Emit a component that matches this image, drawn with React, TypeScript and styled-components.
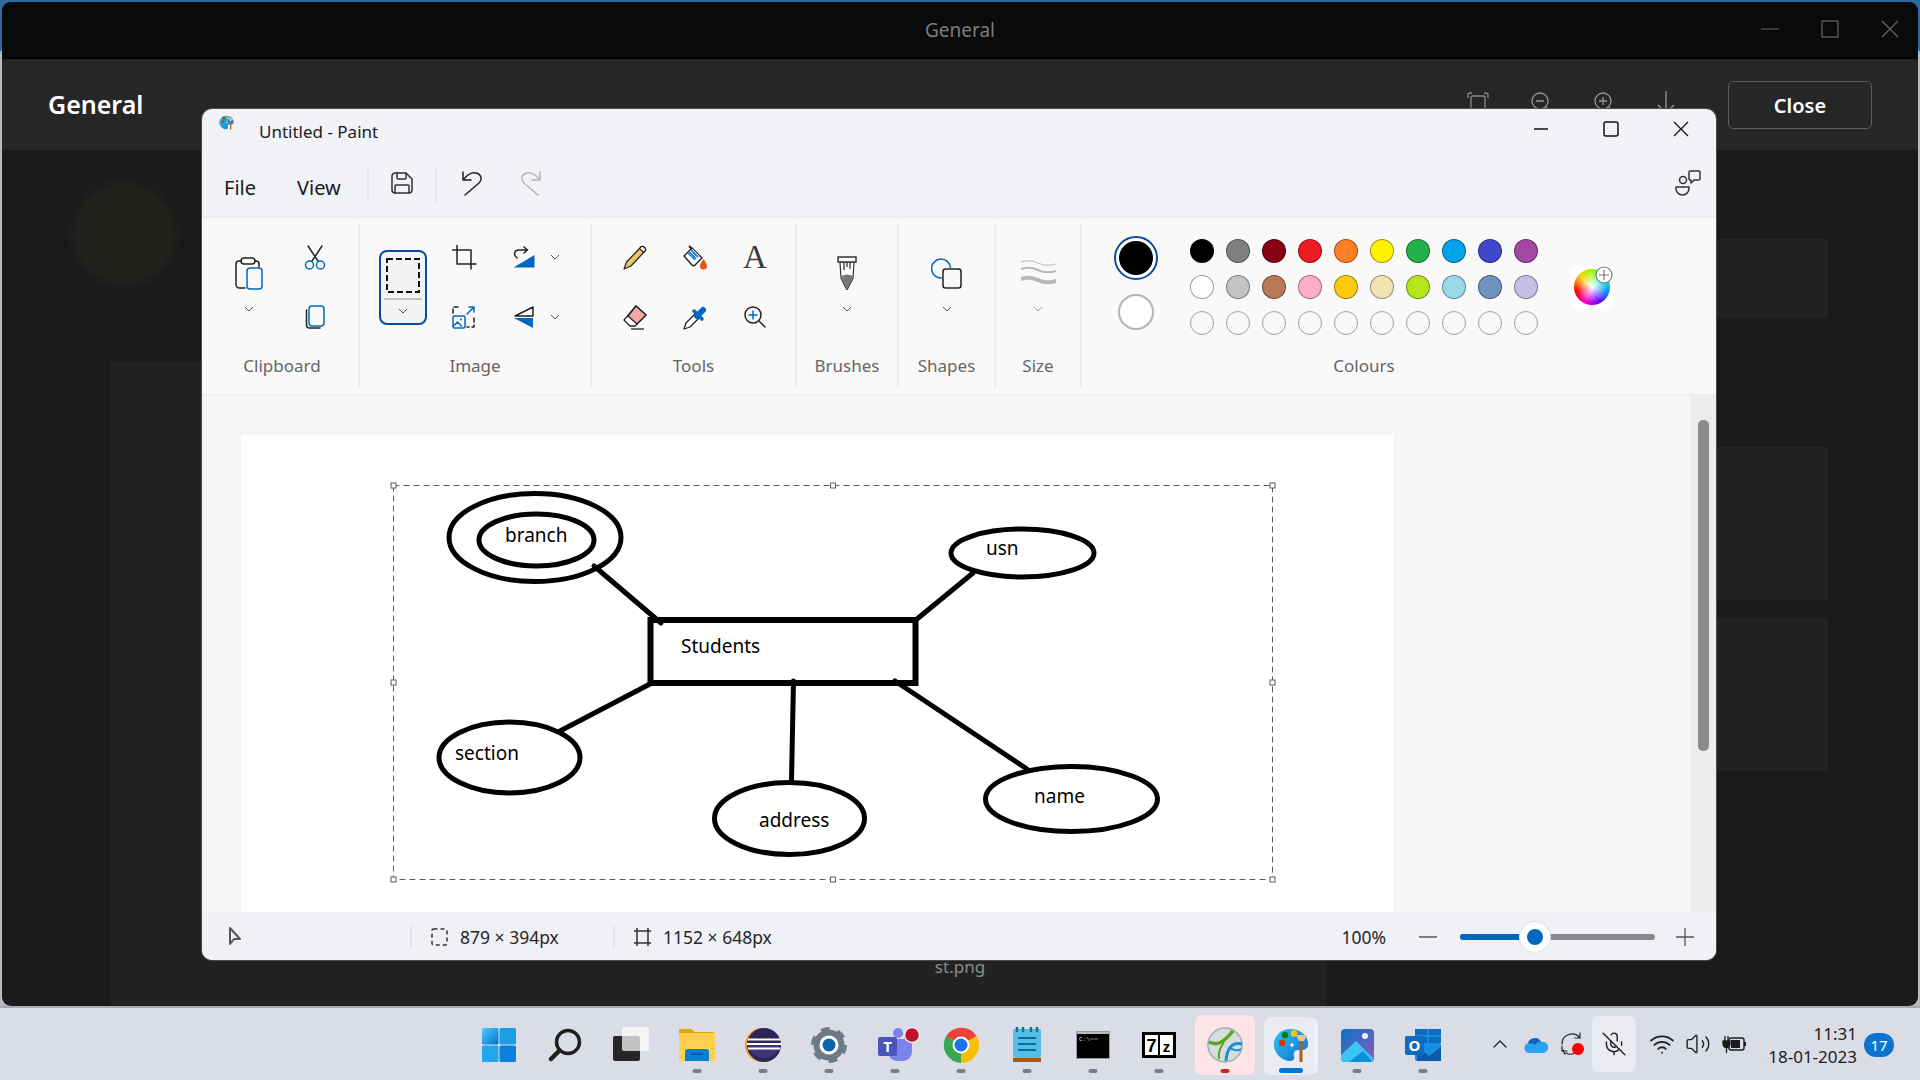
import { ReactNode } from 'react';
import styled, { createGlobalStyle } from 'styled-components';
import { ChevronUp, MicOff, Volume2, Wifi } from 'lucide-react';

const font = '"Noto Sans", "Open Sans", Arial, sans-serif';

const GlobalStyle = createGlobalStyle`
    html, body {
        margin: 0;
        padding: 0;
        width: 1920px;
        height: 1080px;
        overflow: hidden;
    }
    body {
        font-family: ${font};
        background: #dadce6;
    }
    svg {
        display: block;
        flex-shrink: 0;
    }
`;

const Screen = styled.div`
    position: relative;
    width: 1920px;
    height: 1080px;
    display: flex;
    flex-direction: column;
    background: linear-gradient(#2f6a9e 0, #2f6a9e 50px, #b9bac0 52px);
`;

/* viewer window behind paint */
const Viewer = styled.div`
    height: 1004px;
    margin: 2px 2px 0;
    border-radius: 9px;
    overflow: hidden;
    display: flex;
    flex-direction: column;
    background: #1a1a1a;
`;

const ViewerTitle = styled.div`
    position: relative;
    flex: 0 0 56px;
    display: flex;
    align-items: center;
    justify-content: center;
    background: #0a0a0a;
    border-bottom: 1px solid #000;
    color: #7d7d7d;
    font-size: 19px;
`;

const ViewerControls = styled.div`
    position: absolute;
    right: -2px;
    top: 0;
    height: 54px;
    display: flex;
    align-items: center;
`;

const ViewerControl = styled.div`
    width: 60px;
    display: flex;
    justify-content: center;
`;

const ViewerHeader = styled.div`
    flex: 0 0 91px;
    display: flex;
    align-items: center;
    padding: 0 46px;
    background: #262626;
`;

const HeaderTitle = styled.div`
    color: #fff;
    font-size: 25px;
    font-weight: 600;
    margin-top: -1px;
`;

const HeaderIcons = styled.div`
    display: flex;
    align-items: center;
    margin-left: auto;
    margin-right: 52px;
    margin-top: -4px;
    gap: 41px;
`;

const CloseButton = styled.button`
    width: 144px;
    height: 48px;
    margin-top: 1px;
    border: 1px solid #5c5c5c;
    border-radius: 5px;
    background: #262626;
    color: #fff;
    font-family: ${font};
    font-size: 20px;
    font-weight: 600;
`;

const ViewerBody = styled.div`
    position: relative;
    flex: 1;
    display: flex;
    padding-left: 108px;
`;

const DocColumn = styled.div`
    width: 1216px;
    display: flex;
    flex-direction: column;
`;

const Avatar = styled.div`
    width: 104px;
    height: 104px;
    margin: 32px 0 76px -38px;
    border-radius: 50%;
    background: #24221f;
    filter: blur(4px);
`;

const DocPanel = styled.div`
    flex: 1;
    background: #222;
`;

const SideColumn = styled.div`
    width: 428px;
    margin-left: auto;
    margin-right: 90px;
    padding-top: 89px;
`;

const SideCard = styled.div<{ $height: number; $gap: number }>`
    height: ${p => p.$height}px;
    margin-bottom: ${p => p.$gap}px;
    background: #222;
`;

const Caption = styled.div`
    position: absolute;
    left: 0;
    right: 0;
    bottom: 28px;
    text-align: center;
    color: #8c8c8c;
    font-size: 17px;
`;

/* paint window */
const PaintWindow = styled.div`
    position: absolute;
    left: 202px;
    top: 109px;
    width: 1514px;
    height: 851px;
    display: flex;
    flex-direction: column;
    overflow: hidden;
    border-radius: 10px;
    background: #f1f3f8;
    box-shadow: 0 0 0 1px #4a4a4a;
`;

const TitleBar = styled.div`
    flex: 0 0 51px;
    display: flex;
    align-items: flex-start;
    padding-left: 17px;
`;

const TitleLogo = styled.div`
    margin: 6px 25px 0 0;
`;

const WindowTitle = styled.div`
    margin-top: 11px;
    color: #1b1b1b;
    font-size: 17px;
    line-height: 24px;
`;

const WindowControls = styled.div`
    display: flex;
    margin-left: auto;
`;

const WindowControl = styled.div<{ $width: number }>`
    width: ${p => p.$width}px;
    height: 40px;
    display: flex;
    align-items: center;
    justify-content: center;
`;

const MenuBar = styled.div`
    flex: 0 0 56px;
    box-sizing: border-box;
    display: flex;
    align-items: center;
    padding: 0 0 6px 22px;
`;

const MenuItem = styled.div<{ $width: number }>`
    width: ${p => p.$width}px;
    margin-top: 4px;
    color: #1b1b1b;
    font-size: 20px;
`;

const MenuDivider = styled.div`
    width: 2px;
    height: 36px;
    background: #e6e7eb;
`;

const MenuIcon = styled.div<{ $width: number }>`
    width: ${p => p.$width}px;
    margin-bottom: 4px;
    display: flex;
    justify-content: center;
`;

const FeedbackIcon = styled.div`
    margin: 0 15px 4px auto;
`;

const Ribbon = styled.div`
    flex: 0 0 180px;
    display: flex;
    background: #f9f9f9;
    border-top: 2px solid #ededed;
    border-bottom: 2px solid #ededed;
    box-sizing: border-box;
`;

const Group = styled.section<{ $width: number; $last?: boolean }>`
    flex: 0 0 ${p => p.$width}px;
    box-sizing: border-box;
    height: 164px;
    margin: 5px 0;
    padding-top: 4px;
    display: flex;
    flex-direction: column;
    border-right: ${p => (p.$last ? 'none' : '2px solid #ececec')};
`;

const ToolGrid = styled.div<{ $columns: string; $inset: number }>`
    height: 120px;
    display: grid;
    grid-template-columns: ${p => p.$columns};
    grid-template-rows: 60px 60px;
    padding-left: ${p => p.$inset}px;
`;

const ToolCell = styled.div`
    display: flex;
    align-items: center;
    justify-content: center;
`;

const LargeTool = styled.div`
    grid-row: span 2;
    display: flex;
    flex-direction: column;
    align-items: center;
    padding-top: 28px;
`;

const LargeToolIcon = styled.div`
    height: 36px;
    display: flex;
    align-items: center;
`;

const LargeToolChevron = styled.div`
    margin-top: 15px;
`;

const SelectButton = styled.div`
    grid-row: span 2;
    align-self: center;
    box-sizing: border-box;
    height: 75px;
    display: flex;
    flex-direction: column;
    align-items: center;
    padding-top: 6px;
    border: 2px solid #0a4c9c;
    border-radius: 8px;
    background: #f4f4f4;
`;

const SelectRule = styled.div`
    align-self: stretch;
    height: 2px;
    margin: 5px 3px 8px;
    background: #c4c4c4;
`;

const SplitTool = styled.div`
    display: flex;
    align-items: center;
    gap: 15px;
    padding-left: 12px;
`;

const GroupLabel = styled.div<{ $shift?: number }>`
    height: 20px;
    margin-top: 9px;
    padding-left: ${p => p.$shift || 0}px;
    line-height: 20px;
    text-align: center;
    color: #666;
    font-size: 17px;
`;

const ColoursRow = styled.div`
    height: 120px;
    display: flex;
    align-items: flex-start;
    padding-left: 32px;
`;

const ActiveColours = styled.div`
    width: 44px;
    margin-top: 9px;
    display: flex;
    flex-direction: column;
    align-items: center;
    gap: 14px;
`;

const PrimaryColour = styled.div`
    box-sizing: border-box;
    width: 44px;
    height: 44px;
    border: 2px solid #0a4c9c;
    border-radius: 50%;
    padding: 3px;
    background: #fff;
    background-clip: padding-box;
`;

const PrimaryFill = styled.div`
    width: 100%;
    height: 100%;
    border-radius: 50%;
    background: #000;
`;

const SecondaryColour = styled.div`
    box-sizing: border-box;
    width: 36px;
    height: 36px;
    border: 2px solid #b4b4b4;
    border-radius: 50%;
    background: #fff;
`;

const SwatchGrid = styled.div`
    margin: 6px 0 0 26px;
    display: grid;
    grid-template-columns: repeat(10, 36px);
    grid-auto-rows: 36px;
`;

const SwatchCell = styled.div`
    display: flex;
    align-items: center;
    justify-content: center;
`;

const Swatch = styled.div<{ $colour?: string }>`
    box-sizing: border-box;
    width: 24px;
    height: 24px;
    border-radius: 50%;
    background: ${p => p.$colour || 'transparent'};
    border: ${p => (p.$colour ? '1.5px solid rgba(0, 0, 0, 0.38)' : '1.5px solid #a0a0a0')};
`;

const WheelBox = styled.div`
    position: relative;
    width: 43px;
    height: 42px;
    margin: 39px 0 0 27px;
    background: #fff;
`;

const Wheel = styled.div`
    width: 36px;
    height: 36px;
    margin: 3px;
    border-radius: 50%;
    background:
        radial-gradient(circle, #fff 0, rgba(255, 255, 255, 0) 62%),
        conic-gradient(#9f0, #0fc, #09f, #60f, #f0c, #f00, #fc0, #9f0);
`;

const WheelPlus = styled.div`
    position: absolute;
    right: 1px;
    top: 0;
`;

const Workspace = styled.div`
    flex: 1;
    min-height: 0;
    display: flex;
    background: #f6f6f6;
`;

const CanvasArea = styled.div`
    flex: 1;
    padding: 39px 0 0 39px;
    overflow: hidden;
`;

const Canvas = styled.div`
    width: 1152px;
    height: 477px;
    background: #fff;
`;

const ScrollTrack = styled.div`
    flex: 0 0 25px;
    box-sizing: border-box;
    padding: 24px 7px 0;
    background: #ececec;
`;

const ScrollThumb = styled.div`
    height: 331px;
    border-radius: 5px;
    background: #8b8b8b;
`;

const StatusBar = styled.div`
    flex: 0 0 48px;
    display: flex;
    align-items: center;
    padding-top: 1px;
    box-sizing: border-box;
    color: #262626;
    font-size: 17.5px;
    background: #eff1f7;
`;

const StatusCell = styled.div<{ $width: number; $divider?: boolean }>`
    position: relative;
    box-sizing: border-box;
    width: ${p => p.$width}px;
    display: flex;
    align-items: center;
    gap: 12px;
    padding-left: ${p => (p.$divider ? 19 : 25)}px;
    border-left: ${p => (p.$divider ? '2px solid #e2e3e8' : 'none')};
    height: 22px;
`;

const ZoomControls = styled.div`
    margin-left: auto;
    display: flex;
    align-items: center;
    padding-right: 22px;
`;

const ZoomValue = styled.div`
    margin-right: 33px;
`;

const ZoomSlider = styled.div`
    position: relative;
    width: 195px;
    height: 6px;
    margin: 0 21px 0 23px;
    border-radius: 3px;
    background: #8a8a8a;
`;

const ZoomFill = styled.div`
    height: 100%;
    border-radius: 3px;
    background: #0067c0;
`;

const ZoomThumb = styled.div`
    position: absolute;
    left: 60px;
    top: -12px;
    width: 30px;
    height: 30px;
    box-sizing: border-box;
    border: 7px solid #fff;
    border-radius: 50%;
    background: #0067c0;
    box-shadow: 0 0 0 1px #e2e3e8;
`;

/* taskbar */
const TaskBar = styled.div`
    flex: 1;
    display: flex;
    box-sizing: border-box;
    padding: 7px 26px 0 466px;
    border-top: 2px solid #a9aaae;
    background: #dadce6;
`;

const TaskButton = styled.div`
    position: relative;
    width: 66px;
    height: 60px;
    display: flex;
    align-items: center;
    justify-content: center;
`;

const TaskHighlight = styled.div<{ $variant: 'alert' | 'active' }>`
    position: absolute;
    top: ${p => (p.$variant === 'active' ? 2 : 0)}px;
    bottom: 0;
    left: ${p => (p.$variant === 'active' ? 6 : 3)}px;
    right: ${p => (p.$variant === 'active' ? 10 : 3)}px;
    border-radius: 7px;
    background: ${p => (p.$variant === 'active' ? '#ebecf1' : '#fde4e6')};
    box-shadow: ${p => (p.$variant === 'active' ? '5px 0 0 -1px #f0f1f4' : 'none')};
`;

const TaskIconSlot = styled.div<{ $nudge?: number }>`
    position: relative;
    left: ${p => p.$nudge || 0}px;
`;

const TaskDot = styled.div<{ $variant?: 'alert' | 'active' }>`
    position: absolute;
    bottom: 2px;
    left: 50%;
    transform: translateX(-50%);
    width: ${p => (p.$variant === 'active' ? 24 : 9)}px;
    height: ${p => (p.$variant === 'active' ? 5 : 4)}px;
    border-radius: 3px;
    background: ${p => (p.$variant === 'active' ? '#0078d4' : p.$variant === 'alert' ? '#c42b1c' : '#7b7d84')};
`;

const Tray = styled.div`
    margin-left: auto;
    display: flex;
    align-items: center;
    height: 60px;
    margin-top: -1px;
`;

const TraySlot = styled.div`
    width: 36px;
    display: flex;
    justify-content: center;
`;

const MicSlot = styled.div`
    width: 44px;
    height: 56px;
    margin: 0 8px 0 2px;
    display: flex;
    align-items: center;
    justify-content: center;
    border-radius: 6px;
    background: #ebecf1;
`;

const Clock = styled.div`
    width: 105px;
    margin-top: 1px;
    text-align: right;
    color: #1b1b1b;
    font-size: 17px;
    line-height: 23px;
`;

const Badge = styled.div`
    width: 30px;
    height: 24px;
    margin: 2px 0 0 7px;
    border-radius: 12px;
    text-align: center;
    color: #fff;
    font-size: 15px;
    line-height: 24px;
    background: #0a74cf;
`;

const SerifGlyph = styled.div`
    color: #3a3a3a;
    font-family: "Liberation Serif", serif;
    font-size: 33px;
    line-height: 34px;
`;

const blue = '#0067c0';
const ink = '#222';

const Line = {
    fill: 'none',
    stroke: ink,
    strokeWidth: 1.5,
    strokeLinecap: 'round',
    strokeLinejoin: 'round',
} as const;

const Chevron = ({ colour = '#555' }: { colour?: string }) => (
    <svg width="10" height="6" viewBox="0 0 10 6">
        <path d="M1 1l4 4 4-4" fill="none" stroke={colour} strokeWidth="1" />
    </svg>
);

const PasteIcon = () => (
    <svg width="28" height="34" viewBox="0 0 28 34">
        <path {...Line} d="M10 32H4.500A3.500 3.500 0 0 1 1 28.500V8A3 3 0 0 1 4 5h2M20 5h1a3 3 0 0 1 3 3v3" />
        <rect {...Line} x="6" y="2" width="14" height="6" rx="3" />
        <rect {...Line} stroke={blue} x="12" y="12" width="15" height="21" rx="3" />
    </svg>
);

const CutIcon = () => (
    <svg width="22" height="25" viewBox="0 0 22 25">
        <path {...Line} d="M4 1l10 15M18 1L8 16" />
        <circle {...Line} stroke={blue} cx="5.500" cy="20" r="4" />
        <circle {...Line} stroke={blue} cx="16.500" cy="20" r="4" />
    </svg>
);

const CopyIcon = () => (
    <svg width="20" height="24" viewBox="0 0 20 24">
        <path {...Line} d="M1.500 5v15a3 3 0 0 0 3 3H15" />
        <rect {...Line} stroke={blue} x="4" y="1" width="15" height="20" rx="3" />
    </svg>
);

const SelectIcon = () => (
    <svg width="34" height="35" viewBox="0 0 34 35">
        <rect x="1" y="1" width="32" height="33" fill="#f4f4f4" stroke="#111" strokeWidth="2" strokeDasharray="6 3" />
    </svg>
);

const CropIcon = () => (
    <svg width="25" height="25" viewBox="0 0 25 25">
        <path {...Line} d="M5 .5V19h19M.5 5H19v19" />
    </svg>
);

const RotateIcon = () => (
    <svg width="22" height="22" viewBox="0 0 22 22">
        <path d="M21.500 9v12.500H.5z" fill={blue} />
        <path {...Line} d="M4 12C0 9 1 4 6 4h8M11 1l3.500 3L11 7" />
    </svg>
);

const FlipIcon = () => (
    <svg width="22" height="22" viewBox="0 0 22 22">
        <path {...Line} d="M20 1L2 10h18z" />
        <path d="M1 12h19v10z" fill={blue} />
    </svg>
);

const ResizeIcon = () => (
    <svg width="24" height="24" viewBox="0 0 24 24">
        <path {...Line} strokeDasharray="4 3" d="M1 8V2h8M22 13v9h-7" />
        <path {...Line} stroke={blue} d="M15 9l7-7M17 2h5v5" />
        <rect {...Line} stroke={blue} x="1" y="11" width="12" height="12" rx="1.500" />
        <path {...Line} stroke={blue} d="M1.500 21l4-4 4 4" />
        <circle cx="9" cy="14.500" r="1" fill={blue} />
    </svg>
);

const PencilIcon = () => (
    <svg width="24" height="25" viewBox="0 0 24 25">
        <path d="M1 24l2.500-7L18 2c2-2 6 2 4 4L8 21z" fill="#ecc46c" stroke={ink} strokeWidth="1.200" strokeLinejoin="round" />
        <path d="M18 2c2-2 6 2 4 4l-1.500 1.500-4-4z" fill="#fff" stroke={ink} strokeWidth="1.200" />
    </svg>
);

const FillIcon = () => (
    <svg width="25" height="25" viewBox="0 0 25 25">
        <path d="M1 11l8-8 10 10-7 7a2 2 0 0 1-3 0z" fill="#fff" stroke={ink} strokeWidth="1.400" strokeLinejoin="round" />
        <path d="M4.500 8.500L9 4l7 7-4.500 4.500z" fill="#2d88d8" />
        <path d="M7 6l7 7M9 4l7 7" stroke="#fff" strokeWidth="1" />
        <path d="M6 1l3 3" stroke={ink} strokeWidth="2" />
        <path d="M20.500 14c1.500 2.500 3.500 4.500 3.500 7a3.500 3.500 0 0 1-7 0c0-2.500 2-4.500 3.500-7z" fill="#e4561a" />
    </svg>
);

const EraserIcon = () => (
    <svg width="24" height="25" viewBox="0 0 24 25">
        <path d="M13 1l10 9-11 11H7l-6-6z" fill="#fff" stroke={ink} strokeWidth="1.300" strokeLinejoin="round" />
        <path d="M13 1l10 9-9 9-9-8z" fill="#f3a8a6" stroke={ink} strokeWidth="1.300" strokeLinejoin="round" />
        <path d="M8 24h13" stroke={ink} strokeWidth="1.300" />
    </svg>
);

const PickerIcon = () => (
    <svg width="25" height="25" viewBox="0 0 25 25">
        <path d="M1 24l2-6L13 8l4 4L7 22z" fill="#fff" stroke={ink} strokeWidth="1.300" strokeLinejoin="round" />
        <path d="M11 6l8 8" stroke={blue} strokeWidth="3.500" strokeLinecap="round" />
        <path d="M14 11l6-6" stroke={blue} strokeWidth="6" strokeLinecap="round" />
    </svg>
);

const MagnifierIcon = () => (
    <svg width="22" height="22" viewBox="0 0 22 22">
        <circle {...Line} cx="9" cy="9" r="8" />
        <path {...Line} d="M15 15l6 6" />
        <path {...Line} stroke={blue} d="M9 5v8M5 9h8" />
    </svg>
);

const BrushIcon = () => (
    <svg width="20" height="34" viewBox="0 0 20 34">
        <path d="M3 6l1 16 6 12 6-12 1-16z" fill="#fff" stroke="#333" strokeWidth="1.200" />
        <path d="M4 20q6-3 12 0l-6 14z" fill="#777" />
        <path d="M1 1h18v5H1z" fill="#fff" stroke="#333" strokeWidth="1.500" />
        <path d="M7 6v8M10 6v5M13 6v7" stroke="#333" strokeWidth="1.300" />
    </svg>
);

const ShapesIcon = () => (
    <svg width="31" height="31" viewBox="0 0 31 31">
        <path d="M11 20A9.500 9.500 0 1 1 19.500 10" fill="none" stroke={blue} strokeWidth="1.500" />
        <rect {...Line} x="12" y="11" width="18" height="19" rx="2.500" />
    </svg>
);

const SizeIcon = () => (
    <svg width="35" height="27" viewBox="0 0 35 27" fill="none" stroke="#b8b8b8">
        <path strokeWidth="1" d="M0 2q9-3 17 1t18 1" />
        <path strokeWidth="2" d="M0 9q9-3 17 1t18 1" />
        <path strokeWidth="4" d="M0 19q9-3 17 1t18 1" />
    </svg>
);

const SaveIcon = () => (
    <svg width="22" height="22" viewBox="0 0 22 22">
        <path {...Line} stroke="#333" d="M1 4a3 3 0 0 1 3-3h11l6 6v11a3 3 0 0 1-3 3H4a3 3 0 0 1-3-3z" />
        <path {...Line} stroke="#333" d="M6 1v5a1 1 0 0 0 1 1h7a1 1 0 0 0 1-1V1M4 21v-7a1 1 0 0 1 1-1h12a1 1 0 0 1 1 1v7" />
    </svg>
);

const UndoIcon = ({ colour, flip }: { colour: string; flip?: boolean }) => (
    <svg width="22" height="25" viewBox="0 0 22 25" style={flip ? { transform: 'scaleX(-1)' } : undefined}>
        <path {...Line} stroke={colour} d="M4 24l14-12c4-4 2-9-3-10-4-1-8 1-12 6M2 1v8h8" />
    </svg>
);

const FeedbackGlyph = () => (
    <svg width="26" height="26" viewBox="0 0 26 26">
        <circle {...Line} stroke="#333" cx="8" cy="10" r="3.500" />
        <path {...Line} stroke="#333" d="M1 17h13v1.500a6.500 6.500 0 0 1-13 0z" />
        <path {...Line} stroke="#333" d="M14 2a1 1 0 0 1 1-1h9a1 1 0 0 1 1 1v7a1 1 0 0 1-1 1h-5l-3 3v-3h-1a1 1 0 0 1-1-1z" />
    </svg>
);

const PaintLogo = ({ size }: { size: number }) => (
    <svg width={size} height={size} viewBox="0 0 36 36">
        <defs>
            <linearGradient id="palette" x1="0" y1="0" x2="1" y2="1">
                <stop offset="0" stopColor="#35c4f5" />
                <stop offset="1" stopColor="#0a6fd0" />
            </linearGradient>
        </defs>
        <path d="M17 2C7 2 0 10 1 19c1 8 8 15 16 15 3 0 5-2 4-5-1-3 1-6 4-6h4c4 0 7-3 6-8C34 8 27 2 17 2z" fill="url(#palette)" />
        <circle cx="9" cy="16" r="3.200" fill="#d83b01" />
        <circle cx="12" cy="8" r="3.200" fill="#107c10" />
        <circle cx="21" cy="6.500" r="3.200" fill="#ffc500" />
        <circle cx="19" cy="18" r="1.800" fill="#e8f6fe" />
        <rect x="26.500" y="13" width="3" height="22" fill="#a5651d" />
        <path d="M23 8h11l-3 6h-5z" fill="#e8c28d" />
    </svg>
);

const WindowsLogo = () => (
    <svg width="36" height="36" viewBox="0 0 36 36">
        <defs>
            <linearGradient id="winPane" x1="0" y1="0" x2="1" y2="1">
                <stop offset="0" stopColor="#4fcbfb" />
                <stop offset="1" stopColor="#0072cf" />
            </linearGradient>
        </defs>
        <rect x="1" y="1" width="16.500" height="16.500" rx="1.500" fill="url(#winPane)" />
        <rect x="18.500" y="1" width="16.500" height="16.500" rx="1.500" fill="#1c9de8" />
        <rect x="1" y="18.500" width="16.500" height="16.500" rx="1.500" fill="#24a6ec" />
        <rect x="18.500" y="18.500" width="16.500" height="16.500" rx="1.500" fill="#0b7fdb" />
    </svg>
);

const SearchLogo = () => (
    <svg width="34" height="34" viewBox="0 0 34 34" fill="none" stroke="#1f1f1f">
        <circle cx="20" cy="14" r="11.500" strokeWidth="3.500" />
        <path d="M11.500 22.500L3 31" strokeWidth="4.500" strokeLinecap="round" />
    </svg>
);

const TaskViewLogo = () => (
    <svg width="36" height="36" viewBox="0 0 36 36">
        <rect x="0" y="9" width="27" height="25" rx="2" fill="#262626" />
        <rect x="9" y="0" width="27" height="24" rx="2" fill="#fff" fillOpacity="0.72" />
    </svg>
);

const ExplorerLogo = () => (
    <svg width="36" height="36" viewBox="0 0 36 36">
        <path d="M0 4a2 2 0 0 1 2-2h10l4 3h18a2 2 0 0 1 2 2v5H0z" fill="#e2a300" />
        <path d="M0 6h36v28H0z" fill="#ffd04f" />
        <path d="M6 34v-9a3 3 0 0 1 3-3h18a3 3 0 0 1 3 3v9z" fill="#0a7fd0" />
        <path d="M12 27h12" stroke="#06508a" strokeWidth="1.500" />
    </svg>
);

const EclipseLogo = () => (
    <svg width="36" height="36" viewBox="0 0 36 36">
        <circle cx="17" cy="18" r="17" fill="#f39c25" />
        <circle cx="19" cy="18" r="17" fill="#2b2458" />
        <path d="M2.500 18a17 17 0 0 0 33 0z" fill="#3f3478" />
        <path d="M3 12.500h32M2 17h34M3 21.500h32" stroke="#fff" strokeWidth="2" />
    </svg>
);

const SettingsLogo = () => (
    <svg width="36" height="36" viewBox="0 0 36 36">
        <circle cx="18" cy="18" r="12" fill="none" stroke="#6c7a88" strokeWidth="7" />
        <circle cx="18" cy="18" r="15" fill="none" stroke="#6c7a88" strokeWidth="6" strokeDasharray="8 7.700" />
        <circle cx="18" cy="18" r="9.500" fill="#fff" />
        <circle cx="18" cy="18" r="6.500" fill="#0a63ad" />
    </svg>
);

const TeamsLogo = () => (
    <svg width="44" height="36" viewBox="0 0 44 36">
        <circle cx="20" cy="6" r="5" fill="#7b83eb" />
        <circle cx="30" cy="9" r="4" fill="#5059c9" />
        <path d="M10 12h24v13a9 9 0 0 1-9 9h-6a9 9 0 0 1-9-9z" fill="#7b83eb" />
        <rect x="0" y="10" width="19" height="19" rx="2" fill="#4b53bc" />
        <text x="9.500" y="25" textAnchor="middle" fontSize="15" fontWeight="700" fill="#fff" fontFamily={font}>T</text>
        <circle cx="34" cy="8" r="7.500" fill="#c50f2f" stroke="#eee" strokeWidth="1.500" />
    </svg>
);

const ChromeLogo = () => (
    <svg width="36" height="36" viewBox="0 0 36 36">
        <path d="M18 18L3 9.300A18 18 0 0 1 33.600 9z" fill="#ea4335" />
        <path d="M18 18L33.600 9A18 18 0 0 1 18 36z" fill="#fbbc04" />
        <path d="M18 18V36A18 18 0 0 1 3 9.300z" fill="#34a853" />
        <circle cx="18" cy="18" r="8.500" fill="#fff" />
        <circle cx="18" cy="18" r="6.500" fill="#1a73e8" />
    </svg>
);

const NotepadLogo = () => (
    <svg width="30" height="36" viewBox="0 0 30 36">
        <rect x="1" y="2" width="28" height="29" rx="2" fill="#57bfe6" />
        <rect x="1" y="31" width="28" height="4" fill="#b5540f" />
        <path d="M5 4V1M11 4V1M19 4V1M25 4V1" stroke="#0d6d96" strokeWidth="2.500" strokeLinecap="round" />
        <path d="M6 11h18M6 17h18M6 23h18" stroke="#0d6d96" strokeWidth="2" />
    </svg>
);

const ConsoleLogo = () => (
    <svg width="34" height="28" viewBox="0 0 34 28">
        <rect x="0.500" y="0.500" width="33" height="27" fill="#000" stroke="#9a9ca3" />
        <rect x="1" y="1" width="32" height="2" fill="#b9bac0" />
        <text x="3" y="10" fontSize="6" fill="#ddd" fontFamily="Liberation Mono, monospace">C:\</text>
        <path d="M14 8h8" stroke="#777" strokeWidth="1" />
    </svg>
);

const SevenZipLogo = () => (
    <svg width="34" height="26" viewBox="0 0 34 26">
        <rect width="34" height="26" fill="#000" />
        <rect x="3" y="3" width="13" height="20" fill="#fff" />
        <rect x="18" y="3" width="13" height="20" fill="#fff" />
        <text x="9.500" y="20" textAnchor="middle" fontSize="18" fontWeight="700" fill="#000" fontFamily="Liberation Sans, sans-serif">7</text>
        <text x="24.500" y="20" textAnchor="middle" fontSize="15" fontWeight="700" fill="#000" fontFamily="Liberation Sans, sans-serif">z</text>
    </svg>
);

const VpnLogo = () => (
    <svg width="36" height="36" viewBox="0 0 36 36" fill="none">
        <circle cx="18" cy="18" r="17" fill="#d5dedd" stroke="#9fb0b4" strokeWidth="1.500" />
        <path d="M2 15c8 4 14 1 24-11" stroke="#56a51c" strokeWidth="3.500" />
        <path d="M17 15c-4 6-6 10-5 17" stroke="#56a51c" strokeWidth="2" />
        <path d="M35 17c-9-2-15 3-16 17" stroke="#1a8fd1" strokeWidth="3" />
        <path d="M22 20c4 4 10 4 12 2" stroke="#1a8fd1" strokeWidth="2" />
    </svg>
);

const PhotosLogo = () => (
    <svg width="33" height="33" viewBox="0 0 33 33">
        <defs>
            <linearGradient id="photoBack" x1="0" y1="0" x2="1" y2="1">
                <stop offset="0" stopColor="#0a72c8" />
                <stop offset="1" stopColor="#8a5bb8" />
            </linearGradient>
        </defs>
        <rect width="33" height="33" rx="4" fill="url(#photoBack)" />
        <circle cx="24" cy="7" r="3" fill="#f0f4fa" />
        <path d="M0 26L15 12l18 18a4 4 0 0 1-3 3H4a4 4 0 0 1-4-4z" fill="#3cc4f2" />
        <path d="M8 33l14-11 9 10-1 1z" fill="#0b8fd8" />
    </svg>
);

const OutlookLogo = () => (
    <svg width="36" height="36" viewBox="0 0 36 36">
        <rect x="10" y="2" width="26" height="14" fill="#0a6cc4" />
        <rect x="10" y="16" width="26" height="18" rx="2" fill="#1490df" />
        <path d="M23 2v14M10 9h26" stroke="#28a8ea" strokeWidth="1" />
        <path d="M12 20l12 9 12-9v14H12z" fill="#0f5aa8" />
        <rect x="0" y="9" width="19" height="19" rx="2" fill="#0f6cbd" />
        <text x="9.500" y="24" textAnchor="middle" fontSize="15" fontWeight="700" fill="#fff" fontFamily={font}>O</text>
    </svg>
);

const CloudIcon = () => (
    <svg width="24" height="17" viewBox="0 0 24 17">
        <path d="M5 17a5 5 0 0 1-1-9.800 7 7 0 0 1 13-1.200 5.500 5.500 0 0 1 3 11z" fill="#2aa4ec" />
        <path d="M4 7.200a7 7 0 0 1 13-1.200c-3 0-5 1-6 3-2-1.500-5-2-7-1.800z" fill="#0e66bd" />
    </svg>
);

const SyncIcon = () => (
    <svg width="24" height="24" viewBox="0 0 24 24">
        <path {...Line} stroke="#222" strokeWidth="1.200" d="M2 12A10 10 0 0 1 20 6M20 1v5h-5M5 22a10 10 0 0 1-2-4M2 14v5h5M6 21c3 1.500 6 1.500 8 .5" />
        <circle cx="18" cy="17" r="6" fill="#f00" />
    </svg>
);

const BatteryIcon = () => (
    <svg width="24" height="20" viewBox="0 0 24 20">
        <rect x="7" y="4" width="15" height="12" rx="2" fill="none" stroke="#1b1b1b" strokeWidth="1.400" />
        <rect x="9" y="6" width="9" height="8" fill="#1b1b1b" />
        <rect x="22" y="8" width="2" height="4" fill="#1b1b1b" />
        <path d="M1 7h7v3a3.500 3.500 0 0 1-7 0zM3 7V2M6 7V2M4.500 13v6" fill="#1b1b1b" stroke="#1b1b1b" strokeWidth="1.300" />
    </svg>
);

const EDGE = '#5c5c5c';
const diagramFont = { fontFamily: font, fontSize: 19, fill: '#000' };

const handles: [number, number][] = [
    [393.5, 485.5], [833, 485.5], [1272.5, 485.5],
    [393.5, 682.5], [1272.5, 682.5],
    [393.5, 879.5], [833, 879.5], [1272.5, 879.5],
];

const spokes = [
    'M594 566l67 57',
    'M917 619l56-46',
    'M650 684l-90 47',
    'M793.500 681l-2 99',
    'M895 681l132 88',
];

const bubbles = [
    { cx: 535, cy: 537.5, rx: 86, ry: 44 },
    { cx: 536.5, cy: 540, rx: 57.5, ry: 26 },
    { cx: 1022.5, cy: 553, rx: 71.5, ry: 24 },
    { cx: 509.5, cy: 757.5, rx: 70.5, ry: 35.5 },
    { cx: 789.5, cy: 818.5, rx: 75, ry: 36 },
    { cx: 1071.5, cy: 799, rx: 86, ry: 32.5 },
];

const labels = [
    { x: 505, y: 542, text: 'branch' },
    { x: 986, y: 555, text: 'usn' },
    { x: 681, y: 653, text: 'Students' },
    { x: 455, y: 760, text: 'section' },
    { x: 759, y: 827, text: 'address' },
    { x: 1034, y: 803, text: 'name' },
];

// viewBox keeps the numbers in screen space, it was easier to measure that way
const Diagram = () => (
    <svg width="1152" height="477" viewBox="241 435 1152 477">
        <rect x="393.500" y="485.500" width="879" height="394" fill="none" stroke={EDGE} strokeDasharray="6 4" />
        {handles.map(([x, y]) => (
            <rect key={`${x}-${y}`} x={x - 2.5} y={y - 2.5} width="5" height="5" fill="#fff" stroke={EDGE} />
        ))}
        {spokes.map(d => (
            <path key={d} d={d} fill="none" stroke="#000" strokeWidth="5" strokeLinecap="round" />
        ))}
        {bubbles.map(b => (
            <ellipse key={b.cx} {...b} fill="none" stroke="#000" strokeWidth="5" />
        ))}
        <rect x="650.500" y="620" width="265" height="63" fill="none" stroke="#000" strokeWidth="6" />
        {labels.map(l => (
            <text key={l.text} x={l.x} y={l.y} {...diagramFont}>{l.text}</text>
        ))}
    </svg>
);

const palette = [
    '#000000', '#7f7f7f', '#880015', '#ed1c24', '#ff7f27', '#fff200', '#22b14c', '#00a2e8', '#3f48cc', '#a349a4',
    '#ffffff', '#c3c3c3', '#b97a57', '#ffaec9', '#ffc90e', '#efe4b0', '#b5e61d', '#99d9ea', '#7092be', '#c8bfe7',
    '', '', '', '', '', '', '', '', '', '',
];

interface TaskItem {
    key: string;
    icon: ReactNode;
    dot?: boolean;
    nudge?: number;
    state?: 'alert' | 'active';
}

const taskItems: TaskItem[] = [
    { key: 'start', icon: <WindowsLogo /> },
    { key: 'search', icon: <SearchLogo /> },
    { key: 'taskview', icon: <TaskViewLogo /> },
    { key: 'explorer', icon: <ExplorerLogo />, dot: true },
    { key: 'eclipse', icon: <EclipseLogo />, dot: true },
    { key: 'settings', icon: <SettingsLogo />, dot: true },
    { key: 'teams', icon: <TeamsLogo />, dot: true, nudge: 5 },
    { key: 'chrome', icon: <ChromeLogo />, dot: true },
    { key: 'notepad', icon: <NotepadLogo />, dot: true },
    { key: 'console', icon: <ConsoleLogo />, dot: true },
    { key: '7zip', icon: <SevenZipLogo />, dot: true },
    { key: 'vpn', icon: <VpnLogo />, dot: true, state: 'alert' },
    { key: 'paint', icon: <PaintLogo size={36} />, dot: true, state: 'active' },
    { key: 'photos', icon: <PhotosLogo />, dot: true },
    { key: 'outlook', icon: <OutlookLogo />, dot: true },
];

const App = () => (
    <>
        <GlobalStyle />
        <Screen>
            <Viewer>
                <ViewerTitle>
                    General
                    <ViewerControls>
                        <ViewerControl>
                            <svg width="18" height="2" viewBox="0 0 18 2"><path d="M0 1h18" stroke="#666" strokeWidth="1.200" /></svg>
                        </ViewerControl>
                        <ViewerControl>
                            <svg width="18" height="18" viewBox="0 0 18 18"><rect x="1" y="1" width="16" height="16" fill="none" stroke="#666" strokeWidth="1.200" /></svg>
                        </ViewerControl>
                        <ViewerControl>
                            <svg width="18" height="18" viewBox="0 0 18 18"><path d="M1 1l16 16M17 1L1 17" stroke="#666" strokeWidth="1.200" /></svg>
                        </ViewerControl>
                    </ViewerControls>
                </ViewerTitle>
                <ViewerHeader>
                    <HeaderTitle>General</HeaderTitle>
                    <HeaderIcons>
                        <svg width="22" height="22" viewBox="0 0 22 22" fill="none" stroke="#888" strokeWidth="1.300">
                            <path d="M1 6V3a2 2 0 0 1 2-2h2M17 1h2a2 2 0 0 1 2 2v3" />
                            <rect x="4" y="4" width="14" height="18" rx="1.500" />
                        </svg>
                        <svg width="22" height="22" viewBox="0 0 22 22" fill="none" stroke="#999" strokeWidth="1.300">
                            <circle cx="10" cy="9" r="8" />
                            <path d="M6 9h8M16 15l5 6" />
                        </svg>
                        <svg width="22" height="22" viewBox="0 0 22 22" fill="none" stroke="#999" strokeWidth="1.300">
                            <circle cx="10" cy="9" r="8" />
                            <path d="M6 9h8M10 5v8M16 15l5 6" />
                        </svg>
                        <svg width="20" height="24" viewBox="0 0 20 24" fill="none" stroke="#999" strokeWidth="1.300">
                            <path d="M10 0v22M2 14l8 8 8-8" />
                        </svg>
                    </HeaderIcons>
                    <CloseButton>Close</CloseButton>
                </ViewerHeader>
                <ViewerBody>
                    <DocColumn>
                        <Avatar />
                        <DocPanel />
                    </DocColumn>
                    <SideColumn>
                        <SideCard $height={79} $gap={129} />
                        <SideCard $height={153} $gap={18} />
                        <SideCard $height={153} $gap={0} />
                    </SideColumn>
                    <Caption>st.png</Caption>
                </ViewerBody>
            </Viewer>
            <TaskBar>
                {taskItems.map(item => (
                    <TaskButton key={item.key}>
                        {item.state && <TaskHighlight $variant={item.state} />}
                        <TaskIconSlot $nudge={item.nudge}>{item.icon}</TaskIconSlot>
                        {item.dot && <TaskDot $variant={item.state} />}
                    </TaskButton>
                ))}
                <Tray>
                    <TraySlot><ChevronUp size={24} strokeWidth={1.3} color="#222" /></TraySlot>
                    <TraySlot><CloudIcon /></TraySlot>
                    <TraySlot><SyncIcon /></TraySlot>
                    <MicSlot><MicOff size={26} strokeWidth={1.3} color="#222" /></MicSlot>
                    <TraySlot><Wifi size={26} strokeWidth={1.7} color="#222" /></TraySlot>
                    <TraySlot><Volume2 size={26} strokeWidth={1.3} color="#222" /></TraySlot>
                    <TraySlot><BatteryIcon /></TraySlot>
                    <Clock>11:31<br />18-01-2023</Clock>
                    <Badge>17</Badge>
                </Tray>
            </TaskBar>
            <PaintWindow>
                <TitleBar>
                    <TitleLogo><PaintLogo size={15} /></TitleLogo>
                    <WindowTitle>Untitled - Paint</WindowTitle>
                    <WindowControls>
                        <WindowControl $width={68}>
                            <svg width="14" height="2" viewBox="0 0 14 2"><path d="M0 1h14" stroke="#111" strokeWidth="1.300" /></svg>
                        </WindowControl>
                        <WindowControl $width={71}>
                            <svg width="16" height="16" viewBox="0 0 16 16"><rect x="1" y="1" width="14" height="14" rx="2" fill="none" stroke="#111" strokeWidth="1.500" /></svg>
                        </WindowControl>
                        <WindowControl $width={70}>
                            <svg width="16" height="16" viewBox="0 0 16 16"><path d="M1 1l14 14M15 1L1 15" stroke="#111" strokeWidth="1.300" /></svg>
                        </WindowControl>
                    </WindowControls>
                </TitleBar>
                <MenuBar>
                    <MenuItem $width={73}>File</MenuItem>
                    <MenuItem $width={70}>View</MenuItem>
                    <MenuDivider />
                    <MenuIcon $width={66}><SaveIcon /></MenuIcon>
                    <MenuDivider />
                    <MenuIcon $width={70}><UndoIcon colour="#222" /></MenuIcon>
                    <MenuIcon $width={48}><UndoIcon colour="#b4b4b4" flip /></MenuIcon>
                    <FeedbackIcon><FeedbackGlyph /></FeedbackIcon>
                </MenuBar>
                <Ribbon>
                    <Group $width={158}>
                        <ToolGrid $columns="66px 66px" $inset={14}>
                            <LargeTool>
                                <LargeToolIcon><PasteIcon /></LargeToolIcon>
                                <LargeToolChevron><Chevron /></LargeToolChevron>
                            </LargeTool>
                            <ToolCell><CutIcon /></ToolCell>
                            <ToolCell><CopyIcon /></ToolCell>
                        </ToolGrid>
                        <GroupLabel $shift={4}>Clipboard</GroupLabel>
                    </Group>
                    <Group $width={232}>
                        <ToolGrid $columns="48px 74px 70px" $inset={19}>
                            <SelectButton>
                                <SelectIcon />
                                <SelectRule />
                                <Chevron />
                            </SelectButton>
                            <ToolCell><CropIcon /></ToolCell>
                            <SplitTool><RotateIcon /><Chevron /></SplitTool>
                            <ToolCell><ResizeIcon /></ToolCell>
                            <SplitTool><FlipIcon /><Chevron /></SplitTool>
                        </ToolGrid>
                        <GroupLabel>Image</GroupLabel>
                    </Group>
                    <Group $width={205}>
                        <ToolGrid $columns="60px 60px 60px" $inset={13}>
                            <ToolCell><PencilIcon /></ToolCell>
                            <ToolCell><FillIcon /></ToolCell>
                            <ToolCell><SerifGlyph>A</SerifGlyph></ToolCell>
                            <ToolCell><EraserIcon /></ToolCell>
                            <ToolCell><PickerIcon /></ToolCell>
                            <ToolCell><MagnifierIcon /></ToolCell>
                        </ToolGrid>
                        <GroupLabel>Tools</GroupLabel>
                    </Group>
                    <Group $width={102}>
                        <ToolGrid $columns="1fr" $inset={0}>
                            <LargeTool>
                                <LargeToolIcon><BrushIcon /></LargeToolIcon>
                                <LargeToolChevron><Chevron /></LargeToolChevron>
                            </LargeTool>
                        </ToolGrid>
                        <GroupLabel>Brushes</GroupLabel>
                    </Group>
                    <Group $width={97}>
                        <ToolGrid $columns="1fr" $inset={0}>
                            <LargeTool>
                                <LargeToolIcon><ShapesIcon /></LargeToolIcon>
                                <LargeToolChevron><Chevron /></LargeToolChevron>
                            </LargeTool>
                        </ToolGrid>
                        <GroupLabel>Shapes</GroupLabel>
                    </Group>
                    <Group $width={86}>
                        <ToolGrid $columns="1fr" $inset={0}>
                            <LargeTool>
                                <LargeToolIcon><SizeIcon /></LargeToolIcon>
                                <LargeToolChevron><Chevron colour="#a5a5a5" /></LargeToolChevron>
                            </LargeTool>
                        </ToolGrid>
                        <GroupLabel>Size</GroupLabel>
                    </Group>
                    <Group $width={564} $last>
                        <ColoursRow>
                            <ActiveColours>
                                <PrimaryColour><PrimaryFill /></PrimaryColour>
                                <SecondaryColour />
                            </ActiveColours>
                            <SwatchGrid>
                                {palette.map((colour, i) => (
                                    <SwatchCell key={i}><Swatch $colour={colour} /></SwatchCell>
                                ))}
                            </SwatchGrid>
                            <WheelBox>
                                <Wheel />
                                <WheelPlus>
                                    <svg width="18" height="18" viewBox="0 0 18 18">
                                        <circle cx="9" cy="9" r="8" fill="#fff" stroke="#777" strokeWidth="1.200" />
                                        <path d="M9 4v10M4 9h10" stroke="#777" strokeWidth="1.200" />
                                    </svg>
                                </WheelPlus>
                            </WheelBox>
                        </ColoursRow>
                        <GroupLabel>Colours</GroupLabel>
                    </Group>
                </Ribbon>
                <Workspace>
                    <CanvasArea>
                        <Canvas><Diagram /></Canvas>
                    </CanvasArea>
                    <ScrollTrack><ScrollThumb /></ScrollTrack>
                </Workspace>
                <StatusBar>
                    <StatusCell $width={208}>
                        <svg width="14" height="20" viewBox="0 0 14 20"><path d="M3 1v16l4-5h6z" fill="#eff1f7" stroke="#555" strokeWidth="2" strokeLinejoin="round" /></svg>
                    </StatusCell>
                    <StatusCell $width={203} $divider>
                        <svg width="17" height="18" viewBox="0 0 17 18"><rect x="1" y="1" width="15" height="16" rx="1.500" fill="none" stroke="#333" strokeWidth="1.500" strokeDasharray="4 3" /></svg>
                        879 × 394px
                    </StatusCell>
                    <StatusCell $width={300} $divider>
                        <svg width="17" height="18" viewBox="0 0 17 18"><path d="M3 0v18M14 0v18M0 3h17M0 15h17" stroke="#333" strokeWidth="1.500" /></svg>
                        1152 × 648px
                    </StatusCell>
                    <ZoomControls>
                        <ZoomValue>100%</ZoomValue>
                        <svg width="18" height="2" viewBox="0 0 18 2"><path d="M0 1h18" stroke="#555" strokeWidth="1.500" /></svg>
                        <ZoomSlider>
                            <ZoomFill style={{ width: `${(75 / 195) * 100}%` }} />
                            <ZoomThumb />
                        </ZoomSlider>
                        <svg width="18" height="18" viewBox="0 0 18 18"><path d="M9 0v18M0 9h18" stroke="#555" strokeWidth="1.300" /></svg>
                    </ZoomControls>
                </StatusBar>
            </PaintWindow>
        </Screen>
    </>
);

export default App;
